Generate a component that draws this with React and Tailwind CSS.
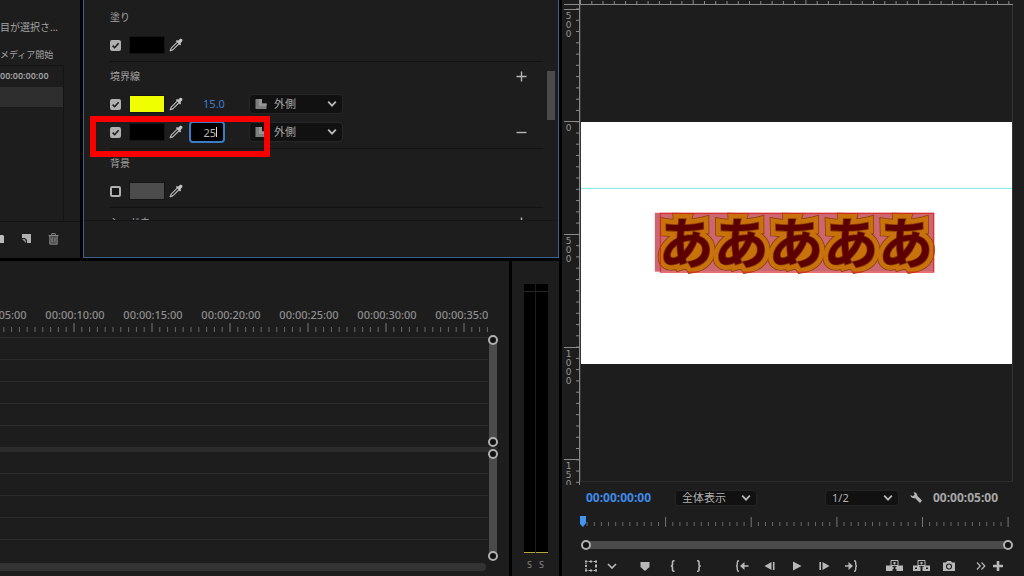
import React, { useState } from 'react';

const EyedropperIcon = () => (
  <svg width="14" height="14" viewBox="0 0 14 14" aria-hidden="true">
    <path d="M8 4.4 2.2 10.2 1.2 12.8 3.8 11.9 9.7 6" fill="none" stroke="#b4b4b4" strokeWidth="1.2" strokeLinejoin="round" />
    <path d="M6.8 3 8 2 9 2.8 10.6 1.2C11.3.5 12.4.6 13 1.2c.6.6.6 1.7 0 2.4L11.4 5.2 12.2 6.2 11 7.4Z" fill="#c4c4c4" />
  </svg>
);

const Chevron = () => (
  <svg width="10" height="8" viewBox="0 0 10 8" aria-hidden="true">
    <path d="M1.2 1.6 5 5.6 8.8 1.6" fill="none" stroke="#b8b8b8" strokeWidth="1.8" />
  </svg>
);

const CheckBox = ({ label, initial }) => {
  const [checked, setChecked] = useState(initial);
  return (
    <label className="relative block size-[11px] shrink-0">
      <input
        type="checkbox"
        aria-label={label}
        checked={checked}
        onChange={(e) => setChecked(e.target.checked)}
        className="block size-[11px] appearance-none rounded-xs border-2 border-[#b0b0b0] bg-[#161616] checked:bg-[#b0b0b0]"
      />
      {checked && (
        <svg className="pointer-events-none absolute inset-0" width="11" height="11" viewBox="0 0 11 11" aria-hidden="true">
          <path d="M2.6 5.6 4.7 7.7 8.6 3.2" fill="none" stroke="#1c1c1c" strokeWidth="1.6" />
        </svg>
      )}
    </label>
  );
};

const PropertyRow = ({ name, checked, swatch, children }) => (
  <div className="relative flex h-7 items-center">
    <CheckBox label={name} initial={checked} />
    <button type="button" aria-label={`${name} color`} className={`ml-2 h-[18px] w-9 shrink-0 border border-[#151515] ${swatch}`} />
    <button type="button" aria-label={`${name} eyedropper`} className="ml-1 shrink-0"><EyedropperIcon /></button>
    {children}
  </div>
);

const Section = ({ title, action, children }) => (
  <section className="border-b border-[#131313] pt-1 pb-0.5">
    <div className="mb-1 flex h-5 items-center justify-between pr-4">
      <h3 className="text-[10px] text-[#a3a3a3]">{title}</h3>
      {action}
    </div>
    {children}
  </section>
);

const PlusMinus = ({ plus, label }) => (
  <button type="button" aria-label={label}>
    <svg width="11" height="11" viewBox="0 0 11 11" aria-hidden="true">
      <path d={plus ? 'M.5 5.5h10M5.5.5v10' : 'M.5 5.5h10'} stroke="#b5b5b5" strokeWidth="1.4" />
    </svg>
  </button>
);

const StrokeSelect = ({ label }) => (
  <label className="relative block">
    <select aria-label={label} defaultValue="outer" className="block h-5 w-[94px] appearance-none rounded-sm border border-[#262626] bg-[#111111] pl-6 text-[11px] leading-4 text-[#a8a8a8] outline-none">
      <option value="outer">外側</option>
      <option value="inner">内側</option>
      <option value="center">中央</option>
    </select>
    <svg className="pointer-events-none absolute top-1 left-1.5" width="12" height="12" viewBox="0 0 12 12" aria-hidden="true">
      <path d="M.5 1H7v4.5h4.5V11H.5Z" fill="#7e7e7e" />
      <path d="M4 1h3v4.5h4.5V8H4Z" fill="#969696" />
    </svg>
    <span className="pointer-events-none absolute inset-y-0 right-1.5 flex items-center"><Chevron /></span>
  </label>
);

const ProjectPanel = () => (
  <aside className="flex w-20 shrink-0 flex-col overflow-hidden bg-[#1d1d1d] whitespace-nowrap text-[#a3a3a3]">
    <p className="mt-[19px] text-[10px] leading-4">目が選択さ...</p>
    <p className="mt-3 text-[9px] leading-4">メディア開始</p>
    <div className="mt-0.5 mr-4 flex-1 border-t border-r border-[#141414]">
      <p className="h-[21px] text-[9px] leading-5 font-semibold">00:00:00:00</p>
      <div className="h-5 bg-[#2e2e2e]" />
    </div>
    <div className="flex h-[37px] items-center border-t border-[#141414] pb-0.5">
      <button type="button" aria-label="New bin" className="w-[22px]">
        <svg width="5" height="8" viewBox="0 0 5 8" aria-hidden="true"><path d="M0 0h3l1 1v7H0Z" fill="#bababa" /></svg>
      </button>
      <button type="button" aria-label="New item" className="w-[26px]">
        <svg width="10" height="10" viewBox="0 0 10 10" aria-hidden="true">
          <path d="M0 0h9v9H5V6L3 4H0Z" fill="#b0b0b0" />
          <path d="M0 5h2.6L4 6.4V9Z" fill="#8c8c8c" />
        </svg>
      </button>
      <button type="button" aria-label="Delete">
        <svg width="11" height="12" viewBox="0 0 11 12" aria-hidden="true">
          <path d="M1.8 3h7.4v8.2H1.8Z" fill="#4a4a4a" />
          <path d="M.5 2.5h10M3.7 2V.7h3.6V2M1.8 3v8.2h7.4V3M4.1 4.5v5M6.9 4.5v5" fill="none" stroke="#858585" />
        </svg>
      </button>
    </div>
  </aside>
);

const PropertiesPanel = () => {
  const [width, setWidth] = useState('25');
  return (
    <section className="min-w-0 flex-1 border-x border-b border-[#3d6290] bg-[#1d1d1d]">
      <div className="flex h-[220px] overflow-hidden">
        <div className="flex-1 pt-[3px] pl-[26px]">
          <Section title="塗り">
            <PropertyRow name="塗り" checked swatch="bg-black" />
          </Section>
          <Section title="境界線" action={<PlusMinus plus label="Add stroke" />}>
            <PropertyRow name="境界線 1" checked swatch="bg-[#f0ff00]">
              <button type="button" className="ml-1 w-[54px] text-center text-[11px] text-[#3f7cd0]">15.0</button>
              <div className="ml-2"><StrokeSelect label="境界線 1" /></div>
            </PropertyRow>
            <PropertyRow name="境界線 2" checked swatch="bg-black">
              <label className="relative ml-1.5 block">
                <input
                  aria-label="境界線 2"
                  value={width}
                  onChange={(e) => setWidth(e.target.value)}
                  className="block h-[22px] w-9 rounded-sm border-2 border-[#3c7cc4] bg-black pr-[7px] text-right text-[11px] text-[#b8b8b8] caret-transparent outline-none"
                />
                <span className="absolute top-1.5 right-2 h-2.5 w-px bg-[#dddddd]" />
              </label>
              <div className="ml-6 flex flex-1 items-center justify-between pr-4">
                <StrokeSelect label="境界線 2" />
                <PlusMinus label="Remove stroke" />
              </div>
              {/* highlight frame */}
              <div className="pointer-events-none absolute -top-0.5 -left-5 z-10 h-[41px] w-[180px] border-6 border-[#f80000]" />
            </PropertyRow>
          </Section>
          <Section title="背景">
            <PropertyRow name="背景" checked={false} swatch="bg-[#4c4c4c]" />
          </Section>
          <Section title="シャドウ" action={<PlusMinus plus label="Add shadow" />} />
        </div>
        <div className="w-[15px] shrink-0 pt-[71px] pl-1">
          <div className="h-[49px] w-2 bg-[#4b4b4b]" />
        </div>
      </div>
      <div className="h-[37px] border-t border-[#141414]" />
    </section>
  );
};

const times = ['00:00:05:00', '00:00:10:00', '00:00:15:00', '00:00:20:00', '00:00:25:00', '00:00:30:00', '00:00:35:00'];

const Knob = ({ className }) => (
  <span className={`absolute size-2.5 rounded-full border-2 border-[#b0b0b0] bg-[#111111] ${className}`} />
);

const TrackGroup = () => (
  <div className="flex flex-1">
    <div className="flex flex-1 flex-col">
      {[0, 1, 2, 3, 4].map((i) => (
        <div key={i} className="flex-1 border-t border-[#2b2b2b]" />
      ))}
    </div>
    <div className="relative mt-0.5 mb-1 ml-px w-2 bg-[#4b4b4b]">
      <Knob className="-top-1 -left-px" />
      <Knob className="-bottom-1 -left-px" />
    </div>
  </div>
);

const Timeline = () => (
  <section className="flex min-w-0 flex-1 flex-col bg-[#1d1d1d] pr-3 pb-[5px]">
    <div className="mr-[9px] overflow-hidden pt-[46px]">
      <div className="-ml-[42px] flex">
        {times.map((t) => (
          <span key={t} className="w-[78px] shrink-0 text-center text-[11px] leading-4 font-medium text-[#8e8e8e]">{t}</span>
        ))}
      </div>
      <svg className="block" width="546" height="10" aria-hidden="true">
        {Array.from({ length: 70 }, (_, i) => (
          <path key={i} d={`M${(3.8 + i * 7.8).toFixed(1)} ${i % 10 === 9 ? 0 : 4}V9`} stroke={i % 10 === 9 ? '#7a7a7a' : '#686868'} />
        ))}
      </svg>
    </div>
    <div className="mt-1 flex flex-1 flex-col">
      <TrackGroup />
      <div className="h-1 bg-[#2c2c2c]" />
      <TrackGroup />
    </div>
    <div className="mt-0.5 mr-[11px] h-2 rounded-r-sm bg-[#333333]" />
  </section>
);

const AudioMeter = () => (
  <section className="flex w-[47px] shrink-0 flex-col items-center bg-[#1d1d1d] pt-[23px] pb-[5px]">
    <div className="flex w-6 flex-1 gap-px">
      {['left', 'right'].map((ch) => (
        <div key={ch} className="flex flex-1 flex-col justify-between bg-black">
          <div className="h-2 border-b border-[#262626]" />
          <div className="h-px bg-[#b5a838]" />
        </div>
      ))}
    </div>
    <div className="mt-1.5 flex text-[9px] leading-3 text-[#8a8a8a]">
      <button type="button" className="w-3">S</button>
      <button type="button" className="w-3">S</button>
    </div>
  </section>
);

const rulerLabels = [
  { y: 9, text: '500' },
  { y: 121, text: '0' },
  { y: 234, text: '500' },
  { y: 347, text: '1000' },
  { y: 459, text: '150' },
];

const SideRuler = () => (
  <svg className="block w-[18px] shrink-0" width="18" height="485" aria-hidden="true">
    <path d="M2 4.5h16M17.5 0v485" stroke="#8a8a8a" />
    {Array.from({ length: 43 }, (_, i) => (
      <path key={i} d={`M14 ${(9 + i * 11.27).toFixed(1)}h4`} stroke="#8a8a8a" />
    ))}
    {rulerLabels.map((l) => (
      <g key={l.y}>
        <path d={`M2 ${l.y}.5h16`} stroke="#8a8a8a" />
        {l.text.split('').map((c, i) => (
          <text key={i} x="6.5" y={l.y + 10 + i * 9} textAnchor="middle" fontSize="9" fill="#959595" fontFamily="DejaVu Sans, sans-serif">{c}</text>
        ))}
      </g>
    ))}
  </svg>
);

const titleProps = { x: 78, y: 141, fontSize: 55, fontWeight: 700, fontFamily: '"Noto Sans CJK JP", sans-serif', strokeLinejoin: 'miter', strokeMiterlimit: 3 };

const Canvas = () => (
  <svg className="block w-full" viewBox="0 0 432 243" role="img" aria-label="あああああ">
    <rect width="432" height="243" fill="#ffffff" />
    <path d="M0 66.5h432" stroke="#7beaea" />
    <rect x="74" y="91" width="280" height="59" fill="#cc6670" />
    <text {...titleProps} fill="#8a3d08" stroke="#8a3d08" strokeWidth="12">あああああ</text>
    <text {...titleProps} fill="#c8720c" stroke="#c8720c" strokeWidth="10.5">あああああ</text>
    <text {...titleProps} fill="#8f4206" stroke="#8f4206" strokeWidth="1.5">あああああ</text>
    <text {...titleProps} fill="#5e0000">あああああ</text>
    <rect x="79.5" y="91.5" width="274" height="59" fill="none" stroke="#e02020" />
  </svg>
);

const MonitorSelect = ({ label, className, options }) => (
  <label className="relative block">
    <select aria-label={label} className={`block h-4 appearance-none rounded-sm border border-[#232323] bg-[#111111] pl-1.5 text-[11px] leading-3 text-[#b0b0b0] outline-none ${className}`}>
      {options.map((o) => <option key={o}>{o}</option>)}
    </select>
    <span className="pointer-events-none absolute inset-y-0 right-1.5 flex items-center"><Chevron /></span>
  </label>
);

const Tool = ({ label, className = 'w-[27px]', w = 14, children }) => (
  <button type="button" aria-label={label} className={`flex shrink-0 justify-center text-[#b8b8b8] ${className}`}>
    <svg width={w} height="14" viewBox={`0 0 ${w} 14`} fill="none" stroke="currentColor" strokeWidth="1.4" aria-hidden="true">{children}</svg>
  </button>
);

const Transport = () => (
  <div className="flex items-center pl-[19px]">
    <Tool label="Safe margins" className="w-5">
      <rect x="2" y="2.5" width="10" height="9" strokeWidth="1" strokeDasharray="1.5 1" />
      <path d="M1 2.5h2M6 2.5h2M11 2.5h2M1 11.5h2M6 11.5h2M11 11.5h2M1 7h2M11 7h2" strokeWidth="2" />
    </Tool>
    <Tool label="Overlay options" className="w-[22px]" w={10}><path d="M1 5 5 9 9 5" strokeWidth="1.6" /></Tool>
    <div className="ml-2 flex">
      <Tool label="Add marker"><path d="M2.5 3h9v5L7 12 2.500 8Z" fill="currentColor" stroke="none" /></Tool>
      <Tool label="Mark in"><path d="M9.500 1.7H8.8Q7.500 1.7 7.500 3v2.200Q7.500 7 5.800 7 7.500 7 7.500 8.800V11q0 1.300 1.300 1.300H9.500" strokeWidth="1.6" /></Tool>
      <Tool label="Mark out"><path d="M5 1.7h.7Q7 1.7 7 3v2.2Q7 7 8.7 7 7 7 7 8.8V11q0 1.3-1.3 1.3H5" strokeWidth="1.6" /></Tool>
    </div>
    <div className="ml-4 flex">
      <Tool label="Go to in" className="w-7">
        <path d="M4 1.7q-1.7 0-1.7 1.6v2Q2.3 7 1 7q1.3 0 1.3 1.7v2q0 1.6 1.7 1.6M7 7h6.5" />
        <path d="M5 7 9.5 3v8Z" fill="currentColor" stroke="none" />
      </Tool>
      <Tool label="Step back"><path d="M1.5 7 8.5 3v8Z" fill="currentColor" stroke="none" /><path d="M10.7 3v8" strokeWidth="1.6" /></Tool>
      <Tool label="Play"><path d="M3 2.5 11.5 7 3 11.5Z" fill="currentColor" stroke="none" /></Tool>
      <Tool label="Step forward"><path d="M5.5 3l7 4-7 4Z" fill="currentColor" stroke="none" /><path d="M3.2 3v8" strokeWidth="1.6" /></Tool>
      <Tool label="Go to out" className="w-7">
        <path d="M10 1.7q1.7 0 1.7 1.6v2Q11.7 7 13 7q-1.3 0-1.3 1.7v2q0 1.6-1.7 1.6M1 7h5" />
        <path d="M9 7 4.5 3v8Z" fill="currentColor" stroke="none" />
      </Tool>
    </div>
    <div className="ml-4 flex">
      <Tool label="Lift" w={17}>
        <path d="M0 6.5h6.5V12H0ZM10.5 6.5H17V12h-6.5Z" fill="currentColor" stroke="none" />
        <path d="M5 1.5h7v5H5ZM8.5 3v2.5M7 4h3" strokeWidth="1" />
        <path d="M6 9h1.5M9.5 9H11" strokeWidth="2" />
      </Tool>
      <Tool label="Extract" w={17}>
        <path d="M1 7.5h4V11H1ZM12 7.5h4V11h-4Z" strokeWidth="2" />
        <path d="M5 1.5h7v5H5ZM8.5 3v2.5M7 4h3" strokeWidth="1" />
        <path d="M5.5 7.5h2V12h-2M9.5 7.5h2V12h-2" fill="currentColor" stroke="none" />
      </Tool>
      <Tool label="Export frame" className="w-7">
        <path d="M1 3.5h3L5.2 2h3.6L10 3.5h3V12H1Z" fill="currentColor" stroke="none" />
        <circle cx="7" cy="7.5" r="2.5" stroke="#1d1d1d" strokeWidth="1.1" />
      </Tool>
    </div>
    <div className="ml-2.5 flex">
      <Tool label="More" className="w-4" w={10}><path d="M1 3.5 4.3 7 1 10.5M5.5 3.5 8.8 7 5.5 10.5" strokeWidth="1.2" /></Tool>
      <Tool label="Button editor" className="w-[18px]" w={10}><path d="M0 7h10M5 2v10" strokeWidth="2.6" /></Tool>
    </div>
  </div>
);

const ProgramMonitor = () => (
  <section className="flex min-w-0 flex-col overflow-hidden bg-[#1d1d1d]">
    <div className="flex h-[485px] shrink-0">
      <SideRuler />
      <div className="mr-[11px] flex min-w-0 flex-1 flex-col pb-[3px]">
        <svg className="block h-[5px] w-full shrink-0" viewBox="0 0 433 5" preserveAspectRatio="none" aria-hidden="true">
          <path d="M0 4.5h433" stroke="#8a8a8a" />
          {Array.from({ length: 39 }, (_, i) => (
            <path key={i} d={`M${(0.5 + i * 11.27).toFixed(1)} ${i % 10 === 0 ? 0 : 1}V4`} stroke="#8a8a8a" />
          ))}
        </svg>
        <div className="flex flex-1 flex-col justify-center border-x border-b border-x-[#353535] border-b-[#2c2c2c]">
          <Canvas />
        </div>
      </div>
    </div>
    <div className="mt-1 flex h-[18px] items-center px-6 text-[12px] font-bold">
      <span className="w-[68px] text-[#3f8ae8]">00:00:00:00</span>
      <div className="ml-[21px] font-normal"><MonitorSelect label="Zoom level" className="w-[82px]" options={['全体表示', '50%', '100%']} /></div>
      <div className="ml-auto font-normal"><MonitorSelect label="Playback resolution" className="w-[74px]" options={['1/2', '1/4']} /></div>
      <button type="button" aria-label="Settings" className="ml-2.5">
        <svg width="14" height="14" viewBox="0 0 14 14" aria-hidden="true">
          <path d="M4.5 1.2C6.500.8 8.500 2.400 8.300 4.800L13 9.600 11 12 6.200 7.200C3.800 7.700 1.600 6.300 1.300 4L3.800 5.300 5.700 3.400Z" fill="#b4b4b4" />
        </svg>
      </button>
      <span className="ml-2.5 w-[67px] text-[#a8a8a8]">00:00:05:00</span>
    </div>
    <div className="relative mt-[9px] mr-[15px] ml-[18px]">
      <svg className="block h-3 w-full" viewBox="0 0 429 12" preserveAspectRatio="none" aria-hidden="true">
        {Array.from({ length: 60 }, (_, i) => (
          <path key={i} d={`M${((i + 1) * 7.135).toFixed(1)} ${i % 12 === 11 ? 1 : 6}V${i % 12 === 11 ? 11 : 10}`} stroke={i % 12 === 11 ? '#777777' : '#686868'} />
        ))}
      </svg>
      <svg className="absolute top-0 left-0" width="6" height="11" viewBox="0 0 6 11" aria-hidden="true">
        <path d="M0 0h6v7L3 11 0 8Z" fill="#3f96f0" />
      </svg>
    </div>
    <div className="relative mt-[13px] mr-4 ml-6 h-2 shrink-0 bg-[#4b4b4b]">
      <Knob className="-top-px -left-[5px]" />
      <Knob className="-top-px -right-[5px]" />
    </div>
    <div className="mt-2.5"><Transport /></div>
  </section>
);

const App = () => (
  <main className="grid h-screen grid-cols-[559fr_462fr] gap-[3px] overflow-hidden bg-black font-['Noto_Sans','Noto_Sans_CJK_JP',sans-serif]">
    <div className="flex min-w-0 flex-col gap-[3px]">
      <div className="flex gap-[3px]">
        <ProjectPanel />
        <PropertiesPanel />
      </div>
      <div className="flex flex-1 gap-[3px]">
        <Timeline />
        <AudioMeter />
      </div>
    </div>
    <ProgramMonitor />
  </main>
);

export default App;
